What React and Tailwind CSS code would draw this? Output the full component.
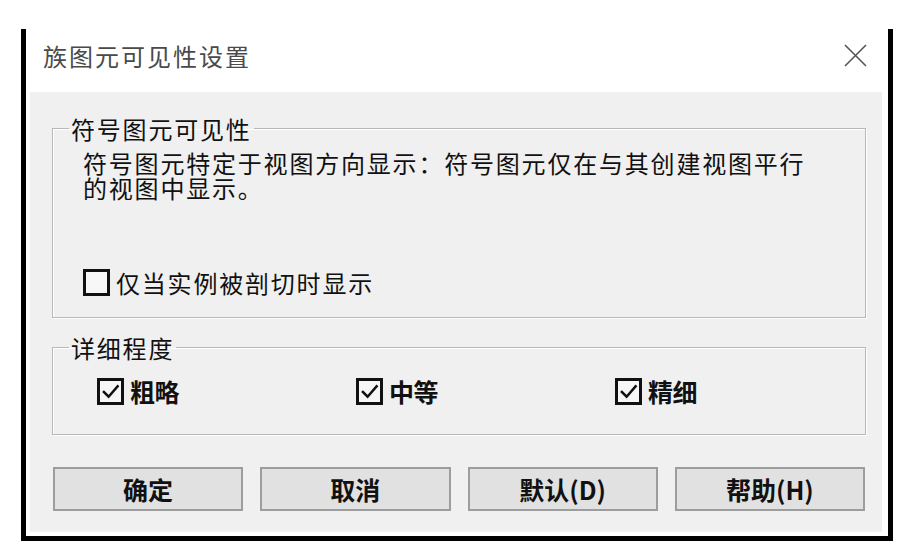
import React from "react";

const FONT = { fontFamily: '"Noto Sans CJK SC", "Noto Sans", sans-serif' };

function Box({ checked }) {
  return (
    <span className="w-[27px] h-[27px] shrink-0 border-[3px] border-[#111] bg-[#f7f7f7] flex items-center justify-center">
      {checked && (
        <svg width="19" height="19" viewBox="0 0 20 20" fill="none">
          <path d="M3 10.5 L8 15.5 L17.5 4.5" stroke="#111" strokeWidth="2.6" strokeLinecap="square" strokeLinejoin="miter" />
        </svg>
      )}
    </span>
  );
}

function Group({ title, children, className = "" }) {
  return (
    <fieldset
      className={
        "min-w-0 ml-[22px] mr-[16px] border border-[#b8b8b8] shadow-[inset_1px_1px_0_#ffffff,1px_1px_0_#ffffff] " +
        className
      }
    >
      <legend className="ml-[16px] px-[2px] text-[24px] leading-[25px] tracking-[1.8px] text-[#111]">
        {title}
      </legend>
      {children}
    </fieldset>
  );
}

function Btn({ children }) {
  return (
    <button className="h-[44px] bg-[#e1e1e1] border-2 border-[#9d9d9d] flex items-center justify-center text-[25px] font-bold leading-none text-[#111]">
      {children}
    </button>
  );
}

export default function App() {
  return (
    <div className="w-[904px] h-[555px] bg-white overflow-hidden" style={FONT}>
      <div className="ml-[21px] mt-[29px] w-[872px] h-[512px] border-x-[5px] border-b-[5px] border-black bg-white flex flex-col">
        <div className="h-[63px] shrink-0 flex items-center justify-between pl-[17px] pr-[21px] pb-[10px]">
          <span className="text-[24px] tracking-[2px] text-[#4a4a4a] leading-none">族图元可见性设置</span>
          <svg width="23" height="23" viewBox="0 0 23 23" fill="none">
            <path d="M1 1 L22 22 M22 1 L1 22" stroke="#555" strokeWidth="1.6" />
          </svg>
        </div>
        <div className="flex-1 bg-[#f0f0f0] ml-[4px] mr-[6px] mb-[4px] pt-[24px]">
          <Group title="符号图元可见性">
            <div className="pl-[30px] pt-[9px] pb-[21px]">
              <p className="w-[745px] text-[24px] leading-[25px] tracking-[1.8px] text-[#111]">
                符号图元特定于视图方向显示：符号图元仅在与其创建视图平行的视图中显示。
              </p>
              <div className="mt-[69px] h-[27px] flex items-center gap-[6px]">
                <Box checked={false} />
                <span className="text-[24px] leading-none tracking-[1.8px] text-[#111]">仅当实例被剖切时显示</span>
              </div>
            </div>
          </Group>
          <Group title="详细程度" className="mt-[17px]">
            <div className="pl-[44px] pt-[18px] pb-[29px] flex h-[74px]">
              <div className="w-[259px] shrink-0 h-[27px] flex items-center gap-[6px]">
                <Box checked />
                <span className="text-[25px] font-bold leading-none tracking-[-0.5px] text-[#111]">粗略</span>
              </div>
              <div className="w-[259px] shrink-0 h-[27px] flex items-center gap-[6px]">
                <Box checked />
                <span className="text-[25px] font-bold leading-none tracking-[-0.5px] text-[#111]">中等</span>
              </div>
              <div className="flex-1 h-[27px] flex items-center gap-[6px]">
                <Box checked />
                <span className="text-[25px] font-bold leading-none tracking-[-0.5px] text-[#111]">精细</span>
              </div>
            </div>
          </Group>
          <div className="mt-[32px] ml-[23px] mr-[17px] grid grid-cols-4 gap-[17px]">
            <Btn>确定</Btn>
            <Btn>取消</Btn>
            <Btn>默认(D)</Btn>
            <Btn>帮助(H)</Btn>
          </div>
        </div>
      </div>
    </div>
  );
}
